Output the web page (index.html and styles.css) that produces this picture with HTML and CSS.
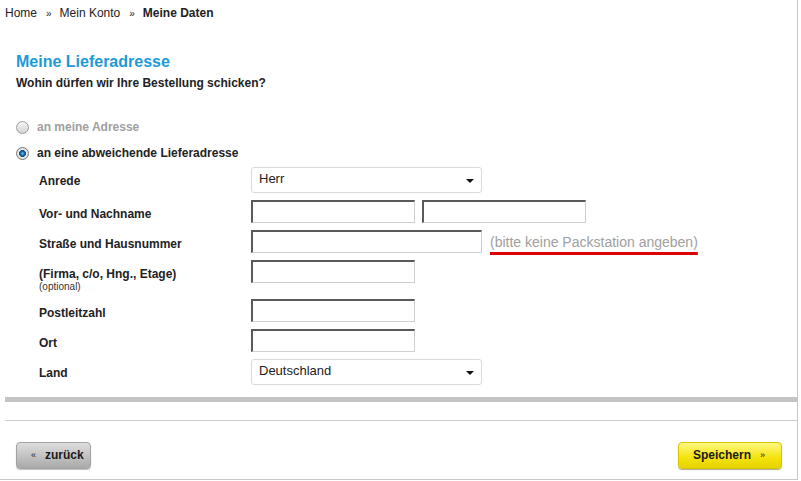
FILE: index.html
```html
<!DOCTYPE html>
<html lang="de">
<head>
    <meta charset="UTF-8">
    <meta name="viewport" content="width=device-width, initial-scale=1.0">
    <title>Meine Daten - Lieferadresse</title>
    <link rel="stylesheet" href="styles.css">
</head>
<body>
<div class="page">
    <div class="breadcrumb">
        <a href="#">Home</a><span class="sep">&raquo;</span><a href="#">Mein Konto</a><span class="sep">&raquo;</span><strong>Meine Daten</strong>
    </div>

    <div class="content">
        <h2>Meine Lieferadresse</h2>
        <p class="intro">Wohin dürfen wir Ihre Bestellung schicken?</p>

        <div class="choice disabled">
            <input type="radio" name="adresse" id="adr-own" disabled>
            <label for="adr-own">an meine Adresse</label>
        </div>
        <div class="choice">
            <input type="radio" name="adresse" id="adr-other" checked>
            <label for="adr-other">an eine abweichende Lieferadresse</label>
        </div>

        <div class="form">
            <div class="row">
                <label class="field-label" for="anrede">Anrede</label>
                <span class="select-wrap">
                    <select id="anrede">
                        <option selected>Herr</option>
                        <option>Frau</option>
                    </select>
                </span>
            </div>
            <div class="row">
                <label class="field-label" for="vorname">Vor- und Nachname</label>
                <div class="fields">
                    <input type="text" id="vorname" class="short">
                    <input type="text" id="nachname" class="short">
                </div>
            </div>
            <div class="row">
                <label class="field-label" for="strasse">Straße und Hausnummer</label>
                <div class="fields">
                    <input type="text" id="strasse" class="long">
                    <span class="hint">(bitte keine Packstation angeben)</span>
                </div>
            </div>
            <div class="row">
                <label class="field-label" for="firma">(Firma, c/o, Hng., Etage)<small>(optional)</small></label>
                <input type="text" id="firma" class="short">
            </div>
            <div class="row">
                <label class="field-label" for="plz">Postleitzahl</label>
                <input type="text" id="plz" class="short">
            </div>
            <div class="row">
                <label class="field-label" for="ort">Ort</label>
                <input type="text" id="ort" class="short">
            </div>
            <div class="row">
                <label class="field-label" for="land">Land</label>
                <span class="select-wrap">
                    <select id="land">
                        <option selected>Deutschland</option>
                        <option>Österreich</option>
                        <option>Schweiz</option>
                    </select>
                </span>
            </div>
        </div>
    </div>

    <div class="bar"></div>
    <div class="rule"></div>

    <div class="actions">
        <button class="btn btn-back"><span class="arr">&laquo;</span>zurück</button>
        <button class="btn btn-save">Speichern<span class="arr">&raquo;</span></button>
    </div>
</div>
</body>
</html>
```

FILE: styles.css
```css
body {
    margin: 0;
    padding: 0;
    font-family: "Liberation Sans", Arial, sans-serif;
    font-size: 12px;
    color: #222;
    background: #fff;
}
.page {
    width: 798px;
    height: 480px;
    box-sizing: border-box;
    padding-left: 5px;
    border-right: 1px solid #c8c8c8;
    border-bottom: 1px solid #c8c8c8;
}

.breadcrumb {
    display: flex;
    align-items: baseline;
    padding-top: 5px;
    line-height: 16px;
}
.breadcrumb a {
    color: #222;
    text-decoration: none;
}
.breadcrumb .sep {
    font-size: 10px;
    margin: 0 8px 0 9px;
}

.content {
    padding-left: 11px;
}
h2 {
    margin: 30px 0 0;
    font-size: 16px;
    line-height: 20px;
    color: #1c9ad6;
}
.intro {
    margin: 4px 0 0;
    font-weight: bold;
    line-height: 14px;
}

.choice {
    display: flex;
    align-items: center;
    height: 16px;
    margin-top: 10px;
    font-weight: bold;
}
.choice.disabled {
    margin-top: 29px;
    color: #a0a0a0;
}
.choice input {
    appearance: none;
    -webkit-appearance: none;
    width: 13px;
    height: 13px;
    margin: 0 8px 0 0;
    border: 1px solid #9c9c9c;
    border-radius: 50%;
    background: linear-gradient(#f4f4f4, #d4d4d4);
    box-sizing: border-box;
}
.choice input:checked {
    border-color: #7a7a7a;
    background: radial-gradient(circle, #6cc0f0 0, #1b6aa8 2px, #0d4a80 3.2px, #f4f4f4 3.8px, #cfcfcf 6px);
}

.form {
    margin: 6px 0 0 23px;
}
.row {
    display: flex;
    align-items: flex-start;
    margin-bottom: 7px;
}
.field-label {
    width: 212px;
    flex: none;
    padding-top: 7px;
    line-height: 14px;
    font-weight: bold;
}
.field-label small {
    display: block;
    font-size: 10px;
    line-height: 11px;
    font-weight: normal;
    color: #333;
}
.fields {
    display: flex;
    align-items: center;
    gap: 7px;
}
input[type="text"] {
    height: 23px;
    box-sizing: border-box;
    margin: 0;
    padding: 2px 4px;
    font: 13px "Liberation Sans", Arial, sans-serif;
    border-top: 2px solid #5a5a5a;
    border-left: 2px solid #5a5a5a;
    border-right: 1px solid #cfcfcf;
    border-bottom: 1px solid #cfcfcf;
    background: #fff;
}
input.short {
    width: 164px;
}
input.long {
    width: 231px;
}
.hint {
    margin-left: 1px;
    font-size: 14px;
    line-height: 16px;
    color: #a0a0a0;
    text-decoration: underline;
    text-decoration-color: #dc0000;
    text-decoration-thickness: 3px;
    text-underline-offset: 5px;
    text-decoration-skip-ink: none;
}

.select-wrap {
    position: relative;
    display: inline-block;
}
.select-wrap::after {
    content: "";
    position: absolute;
    right: 8px;
    top: 12px;
    border-top: 4px solid #111;
    border-left: 4px solid transparent;
    border-right: 4px solid transparent;
    pointer-events: none;
}
select {
    appearance: none;
    -webkit-appearance: none;
    width: 231px;
    height: 26px;
    margin: 0;
    padding: 0 20px 3px 7px;
    font: 13px "Liberation Sans", Arial, sans-serif;
    color: #222;
    background: #fff;
    border: 1px solid #dadada;
    border-radius: 3px;
    box-sizing: border-box;
}

.bar {
    height: 5px;
    margin-top: 12px;
    background: #c4c4c4;
}
.rule {
    height: 1px;
    margin-top: 18px;
    background: #cccccc;
}

.actions {
    display: flex;
    justify-content: space-between;
    padding: 21px 15px 0 11px;
}
.btn {
    display: flex;
    align-items: center;
    height: 27px;
    box-sizing: border-box;
    padding: 0 0 1px 14px;
    font: bold 12px "Liberation Sans", Arial, sans-serif;
    color: #1a1a1a;
    border-radius: 4px;
    cursor: pointer;
}
.btn .arr {
    font-size: 9px;
    font-weight: normal;
}
.btn-back {
    width: 75px;
    border: 1px solid #a2a2a2;
    background: linear-gradient(#dedede, #a9a9a9);
    box-shadow: 0 1px 1px rgba(0, 0, 0, 0.25);
}
.btn-back .arr {
    margin-right: 9px;
}
.btn-save {
    width: 104px;
    border: 1px solid #d6c400;
    background: linear-gradient(#fff982, #f4e20a 60%, #e6d300);
    box-shadow: 0 1px 1px rgba(80, 70, 0, 0.45);
}
.btn-save .arr {
    margin-left: 9px;
}
```
